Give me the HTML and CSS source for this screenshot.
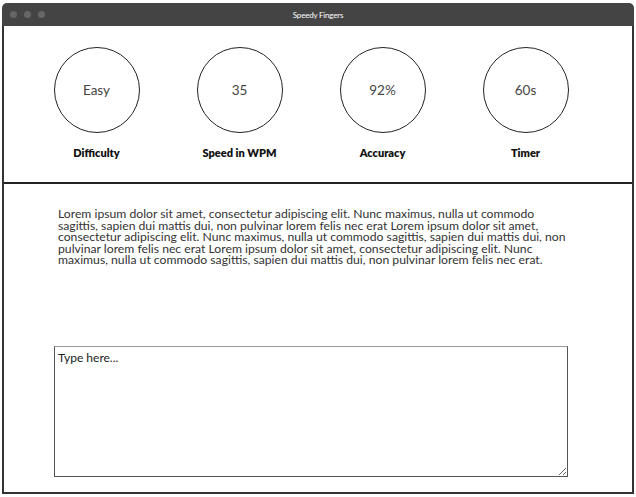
FILE: index.html
```html
<!DOCTYPE html>
<html lang="en">
<head>
    <meta charset="UTF-8">
    <meta name="viewport" content="width=device-width, initial-scale=1.0">
    <title>Speedy Fingers</title>
    <link rel="stylesheet" href="styles.css">
</head>
<body>
    <div class="window">
        <div class="titlebar">
            <div class="dots">
                <span class="dot"></span>
                <span class="dot"></span>
                <span class="dot"></span>
            </div>
            <div class="title">Speedy Fingers</div>
        </div>

        <div class="content">
            <!-- Stats -->
            <div class="stats">
                <div class="stat">
                    <div class="circle">Easy</div>
                    <div class="label">Difficulty</div>
                </div>
                <div class="stat">
                    <div class="circle">35</div>
                    <div class="label">Speed in WPM</div>
                </div>
                <div class="stat">
                    <div class="circle">92%</div>
                    <div class="label">Accuracy</div>
                </div>
                <div class="stat">
                    <div class="circle">60s</div>
                    <div class="label">Timer</div>
                </div>
            </div>

            <!-- Typing area -->
            <div class="typing">
                <p class="sample">Lorem ipsum dolor sit amet, consectetur adipiscing elit. Nunc maximus, nulla ut commodo sagittis, sapien dui mattis dui, non pulvinar lorem felis nec erat Lorem ipsum dolor sit amet, consectetur adipiscing elit. Nunc maximus, nulla ut commodo sagittis, sapien dui mattis dui, non pulvinar lorem felis nec erat Lorem ipsum dolor sit amet, consectetur adipiscing elit. Nunc maximus, nulla ut commodo sagittis, sapien dui mattis dui, non pulvinar lorem felis nec erat.</p>
                <textarea class="input" placeholder="Type here..."></textarea>
            </div>
        </div>
    </div>
</body>
</html>
```

FILE: styles.css
```css
body {
    margin: 0;
    background-color: #fff;
    font-family: "Lato", "Noto Sans", sans-serif;
    color: #333;
}
.window {
    margin: 3px 2px 0 2px;
    width: 632px;
}
.titlebar {
    position: relative;
    height: 23px;
    background-color: #444;
    border-radius: 5px 5px 0 0;
    display: flex;
    align-items: center;
    justify-content: center;
}
.dots {
    position: absolute;
    left: 8px;
    top: 8px;
    display: flex;
    gap: 7px;
}
.dot {
    width: 7px;
    height: 7px;
    border-radius: 50%;
    background-color: #666;
}
.title {
    color: #fff;
    font-size: 8px;
    letter-spacing: -0.2px;
}
.content {
    border: 2px solid #333;
    border-top: none;
    height: 468px;
    box-sizing: border-box;
}
.stats {
    display: grid;
    grid-template-columns: repeat(4, 143px);
    padding: 21px 0 0 21px;
    height: 158px;
    box-sizing: border-box;
    border-bottom: 2px solid #222;
}
.stat {
    display: flex;
    flex-direction: column;
    align-items: center;
}
.circle {
    width: 86px;
    height: 86px;
    border: 1px solid #222;
    border-radius: 50%;
    box-sizing: border-box;
    display: flex;
    align-items: center;
    justify-content: center;
    font-size: 13.5px;
    color: #444;
}
.label {
    margin-top: 13px;
    font-size: 11px;
    font-weight: 800;
    color: #111;
}
.typing {
    padding: 24px 0 0 50px;
}
.sample {
    margin: 0 0 0 4px;
    width: 512px;
    font-size: 12.2px;
    line-height: 11.6px;
    color: #333;
}
.input {
    display: block;
    margin-top: 80px;
    width: 514px;
    height: 131px;
    box-sizing: border-box;
    border: 1px solid #555;
    border-top-color: #999;
    padding: 3px;
    font-family: "Lato", "Noto Sans", sans-serif;
    font-size: 12px;
    color: #333;
}
.input::placeholder {
    color: #222;
}
```
